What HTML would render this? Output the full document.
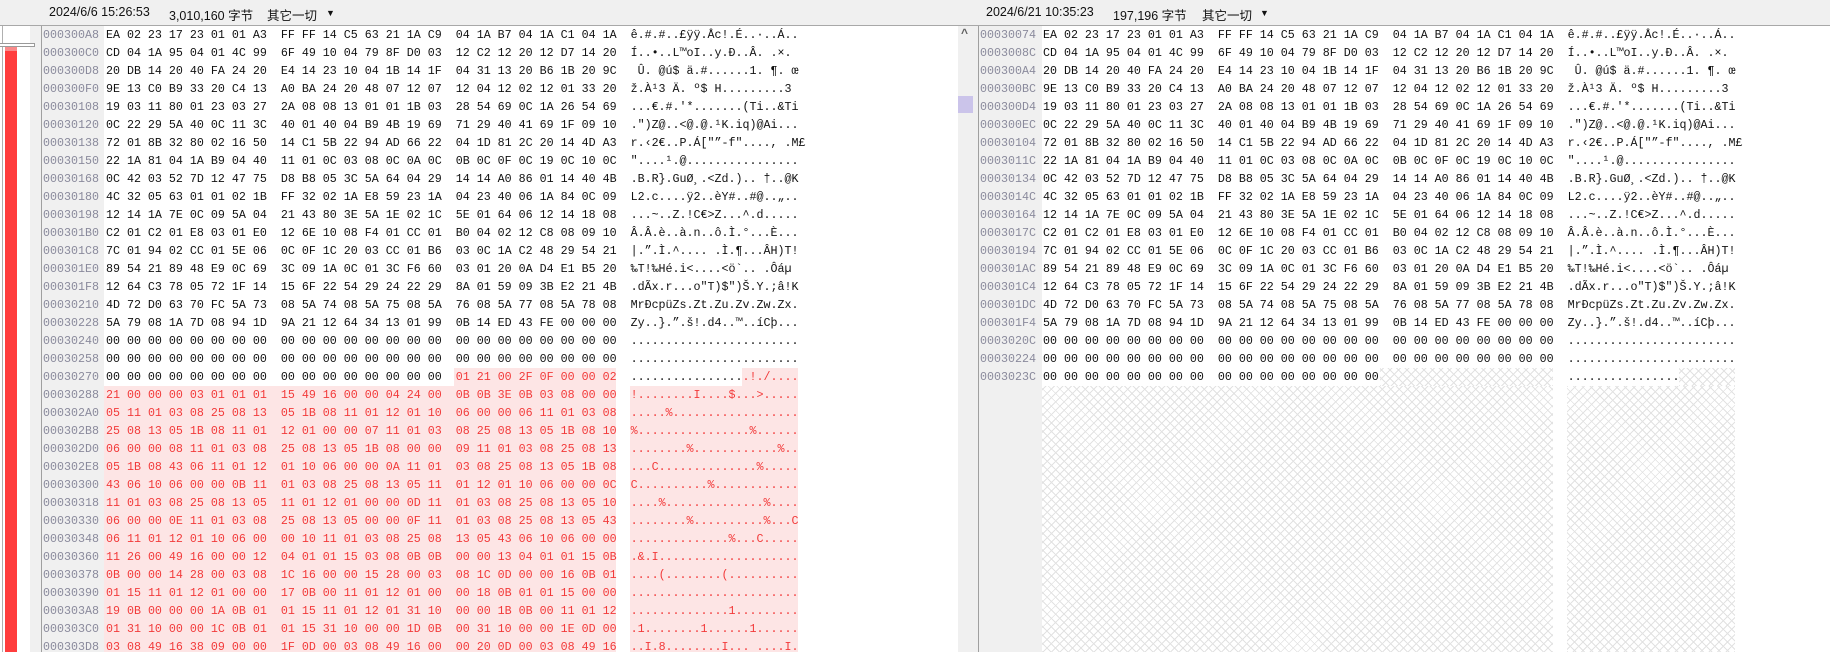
<!DOCTYPE html>
<html><head><meta charset="utf-8">
<style>
html,body{margin:0;padding:0;width:1830px;height:652px;overflow:hidden;background:#fff;position:relative}
.hdr{position:absolute;left:0;top:0;width:1830px;height:25px;background:#f0f0f0;border-bottom:1px solid #a8a8a8;font:12.5px "Liberation Sans","Noto Sans CJK SC",sans-serif;color:#111}
.hdr span{position:absolute;top:5px;white-space:nowrap}
.abs{position:absolute}
pre{position:absolute;margin:0;font:11.67px/18px "Liberation Mono",monospace;color:#111;white-space:pre}
.off{color:#8a8a9c}
.r{color:#f23a3a}
.hl{position:absolute;background:#fde5e5}
.hatch{position:absolute;background-color:#fff;background-image:repeating-linear-gradient(45deg,#e2e2e2 0 1px,transparent 1px 6px),repeating-linear-gradient(-45deg,#e2e2e2 0 1px,transparent 1px 6px)}
</style></head><body>
<div class="hdr">
<span style="left:49px">2024/6/6 15:26:53</span>
<span style="left:169px">3,010,160 字节</span>
<span style="left:267px">其它一切</span>
<span style="left:326px;font-size:9px;top:8px">▼</span>
<span style="left:986px">2024/6/21 10:35:23</span>
<span style="left:1113px">197,196 字节</span>
<span style="left:1202px">其它一切</span>
<span style="left:1260px;font-size:9px;top:8px">▼</span>
</div>
<div class="abs" style="left:2px;top:26px;width:1px;height:626px;background:#b0b0b0"></div>
<div class="abs" style="left:30px;top:26px;width:11px;height:626px;background:#f0f0f0"></div>
<div class="abs" style="left:0;top:43px;width:34px;height:2px;background:#fff;border:1px solid #9a9a9a;border-left:none"></div>
<div class="abs" style="left:5px;top:47px;width:12px;height:605px;background:#ff3d3d"></div>
<div class="abs" style="left:5px;top:47px;width:12px;height:4px;background:#f98a8a"></div>
<div class="abs" style="left:41px;top:26px;width:1px;height:626px;background:#a0a0a0"></div>
<div class="abs" style="left:42px;top:26px;width:62px;height:626px;background:#f0f0f0"></div>
<div class="hl" style="left:454px;top:368px;width:162px;height:18px"></div>
<div class="hl" style="left:742px;top:368px;width:56px;height:18px"></div>
<div class="hl" style="left:104px;top:386px;width:512px;height:266px"></div>
<div class="hl" style="left:630px;top:386px;width:168px;height:266px"></div>
<pre style="left:43px;top:26px"><span class="off">000300A8</span> EA 02 23 17 23 01 01 A3  FF FF 14 C5 63 21 1A C9  04 1A B7 04 1A C1 04 1A  ê.#.#..£ÿÿ.Åc!.É..·..Á..
<span class="off">000300C0</span> CD 04 1A 95 04 01 4C 99  6F 49 10 04 79 8F D0 03  12 C2 12 20 12 D7 14 20  Í..•..L™oI..y.Ð..Â. .×. 
<span class="off">000300D8</span> 20 DB 14 20 40 FA 24 20  E4 14 23 10 04 1B 14 1F  04 31 13 20 B6 1B 20 9C   Û. @ú$ ä.#......1. ¶. œ
<span class="off">000300F0</span> 9E 13 C0 B9 33 20 C4 13  A0 BA 24 20 48 07 12 07  12 04 12 02 12 01 33 20  ž.À¹3 Ä. º$ H.........3 
<span class="off">00030108</span> 19 03 11 80 01 23 03 27  2A 08 08 13 01 01 1B 03  28 54 69 0C 1A 26 54 69  ...€.#.'*.......(Ti..&amp;Ti
<span class="off">00030120</span> 0C 22 29 5A 40 0C 11 3C  40 01 40 04 B9 4B 19 69  71 29 40 41 69 1F 09 10  .")Z@..&lt;@.@.¹K.iq)@Ai...
<span class="off">00030138</span> 72 01 8B 32 80 02 16 50  14 C1 5B 22 94 AD 66 22  04 1D 81 2C 20 14 4D A3  r.‹2€..P.Á["”-f"...., .M£
<span class="off">00030150</span> 22 1A 81 04 1A B9 04 40  11 01 0C 03 08 0C 0A 0C  0B 0C 0F 0C 19 0C 10 0C  "....¹.@................
<span class="off">00030168</span> 0C 42 03 52 7D 12 47 75  D8 B8 05 3C 5A 64 04 29  14 14 A0 86 01 14 40 4B  .B.R}.GuØ¸.&lt;Zd.).. †..@K
<span class="off">00030180</span> 4C 32 05 63 01 01 02 1B  FF 32 02 1A E8 59 23 1A  04 23 40 06 1A 84 0C 09  L2.c....ÿ2..èY#..#@..„..
<span class="off">00030198</span> 12 14 1A 7E 0C 09 5A 04  21 43 80 3E 5A 1E 02 1C  5E 01 64 06 12 14 18 08  ...~..Z.!C€&gt;Z...^.d.....
<span class="off">000301B0</span> C2 01 C2 01 E8 03 01 E0  12 6E 10 08 F4 01 CC 01  B0 04 02 12 C8 08 09 10  Â.Â.è..à.n..ô.Ì.°...È...
<span class="off">000301C8</span> 7C 01 94 02 CC 01 5E 06  0C 0F 1C 20 03 CC 01 B6  03 0C 1A C2 48 29 54 21  |.”.Ì.^.... .Ì.¶...ÂH)T!
<span class="off">000301E0</span> 89 54 21 89 48 E9 0C 69  3C 09 1A 0C 01 3C F6 60  03 01 20 0A D4 E1 B5 20  ‰T!‰Hé.i&lt;....&lt;ö`.. .Ôáµ 
<span class="off">000301F8</span> 12 64 C3 78 05 72 1F 14  15 6F 22 54 29 24 22 29  8A 01 59 09 3B E2 21 4B  .dÃx.r...o"T)$")Š.Y.;â!K
<span class="off">00030210</span> 4D 72 D0 63 70 FC 5A 73  08 5A 74 08 5A 75 08 5A  76 08 5A 77 08 5A 78 08  MrÐcpüZs.Zt.Zu.Zv.Zw.Zx.
<span class="off">00030228</span> 5A 79 08 1A 7D 08 94 1D  9A 21 12 64 34 13 01 99  0B 14 ED 43 FE 00 00 00  Zy..}.”.š!.d4..™..íCþ...
<span class="off">00030240</span> 00 00 00 00 00 00 00 00  00 00 00 00 00 00 00 00  00 00 00 00 00 00 00 00  ........................
<span class="off">00030258</span> 00 00 00 00 00 00 00 00  00 00 00 00 00 00 00 00  00 00 00 00 00 00 00 00  ........................
<span class="off">00030270</span> 00 00 00 00 00 00 00 00  00 00 00 00 00 00 00 00  <span class="r">01 21 00 2F 0F 00 00 02</span>  ................<span class="r">.!./....</span>
<span class="off">00030288</span> <span class="r">21 00 00 00 03 01 01 01  15 49 16 00 00 04 24 00  0B 0B 3E 0B 03 08 00 00  !........I....$...&gt;.....</span>
<span class="off">000302A0</span> <span class="r">05 11 01 03 08 25 08 13  05 1B 08 11 01 12 01 10  06 00 00 06 11 01 03 08  .....%..................</span>
<span class="off">000302B8</span> <span class="r">25 08 13 05 1B 08 11 01  12 01 00 00 07 11 01 03  08 25 08 13 05 1B 08 10  %................%......</span>
<span class="off">000302D0</span> <span class="r">06 00 00 08 11 01 03 08  25 08 13 05 1B 08 00 00  09 11 01 03 08 25 08 13  ........%............%..</span>
<span class="off">000302E8</span> <span class="r">05 1B 08 43 06 11 01 12  01 10 06 00 00 0A 11 01  03 08 25 08 13 05 1B 08  ...C..............%.....</span>
<span class="off">00030300</span> <span class="r">43 06 10 06 00 00 0B 11  01 03 08 25 08 13 05 11  01 12 01 10 06 00 00 0C  C..........%............</span>
<span class="off">00030318</span> <span class="r">11 01 03 08 25 08 13 05  11 01 12 01 00 00 0D 11  01 03 08 25 08 13 05 10  ....%..............%....</span>
<span class="off">00030330</span> <span class="r">06 00 00 0E 11 01 03 08  25 08 13 05 00 00 0F 11  01 03 08 25 08 13 05 43  ........%..........%...C</span>
<span class="off">00030348</span> <span class="r">06 11 01 12 01 10 06 00  00 10 11 01 03 08 25 08  13 05 43 06 10 06 00 00  ..............%...C.....</span>
<span class="off">00030360</span> <span class="r">11 26 00 49 16 00 00 12  04 01 01 15 03 08 0B 0B  00 00 13 04 01 01 15 0B  .&amp;.I....................</span>
<span class="off">00030378</span> <span class="r">0B 00 00 14 28 00 03 08  1C 16 00 00 15 28 00 03  08 1C 0D 00 00 16 0B 01  ....(........(..........</span>
<span class="off">00030390</span> <span class="r">01 15 11 01 12 01 00 00  17 0B 00 11 01 12 01 00  00 18 0B 01 01 15 00 00  ........................</span>
<span class="off">000303A8</span> <span class="r">19 0B 00 00 00 1A 0B 01  01 15 11 01 12 01 31 10  00 00 1B 0B 00 11 01 12  ..............1.........</span>
<span class="off">000303C0</span> <span class="r">01 31 10 00 00 1C 0B 01  01 15 31 10 00 00 1D 0B  00 31 10 00 00 1E 0D 00  .1........1......1......</span>
<span class="off">000303D8</span> <span class="r">03 08 49 16 38 09 00 00  1F 0D 00 03 08 49 16 00  00 20 0D 00 03 08 49 16  ..I.8........I... ....I.</span></pre>
<div class="abs" style="left:958px;top:26px;width:20px;height:626px;background:#f0f0f0"></div>
<div class="abs" style="left:961px;top:26px;font:bold 12px 'Liberation Sans',sans-serif;color:#606060">^</div>
<div class="abs" style="left:958px;top:96px;width:15px;height:17px;background:#cbc4ea"></div>
<div class="abs" style="left:978px;top:26px;width:1px;height:626px;background:#a0a0a0"></div>
<div class="abs" style="left:979px;top:26px;width:63px;height:626px;background:#f0f0f0"></div>
<div class="hatch" style="left:1380px;top:368px;width:173px;height:18px"></div>
<div class="hatch" style="left:1679px;top:368px;width:56px;height:18px"></div>
<div class="hatch" style="left:1042px;top:386px;width:511px;height:266px"></div>
<div class="hatch" style="left:1567px;top:386px;width:168px;height:266px"></div>
<pre style="left:980px;top:26px"><span class="off">00030074</span> EA 02 23 17 23 01 01 A3  FF FF 14 C5 63 21 1A C9  04 1A B7 04 1A C1 04 1A  ê.#.#..£ÿÿ.Åc!.É..·..Á..
<span class="off">0003008C</span> CD 04 1A 95 04 01 4C 99  6F 49 10 04 79 8F D0 03  12 C2 12 20 12 D7 14 20  Í..•..L™oI..y.Ð..Â. .×. 
<span class="off">000300A4</span> 20 DB 14 20 40 FA 24 20  E4 14 23 10 04 1B 14 1F  04 31 13 20 B6 1B 20 9C   Û. @ú$ ä.#......1. ¶. œ
<span class="off">000300BC</span> 9E 13 C0 B9 33 20 C4 13  A0 BA 24 20 48 07 12 07  12 04 12 02 12 01 33 20  ž.À¹3 Ä. º$ H.........3 
<span class="off">000300D4</span> 19 03 11 80 01 23 03 27  2A 08 08 13 01 01 1B 03  28 54 69 0C 1A 26 54 69  ...€.#.'*.......(Ti..&amp;Ti
<span class="off">000300EC</span> 0C 22 29 5A 40 0C 11 3C  40 01 40 04 B9 4B 19 69  71 29 40 41 69 1F 09 10  .")Z@..&lt;@.@.¹K.iq)@Ai...
<span class="off">00030104</span> 72 01 8B 32 80 02 16 50  14 C1 5B 22 94 AD 66 22  04 1D 81 2C 20 14 4D A3  r.‹2€..P.Á["”-f"...., .M£
<span class="off">0003011C</span> 22 1A 81 04 1A B9 04 40  11 01 0C 03 08 0C 0A 0C  0B 0C 0F 0C 19 0C 10 0C  "....¹.@................
<span class="off">00030134</span> 0C 42 03 52 7D 12 47 75  D8 B8 05 3C 5A 64 04 29  14 14 A0 86 01 14 40 4B  .B.R}.GuØ¸.&lt;Zd.).. †..@K
<span class="off">0003014C</span> 4C 32 05 63 01 01 02 1B  FF 32 02 1A E8 59 23 1A  04 23 40 06 1A 84 0C 09  L2.c....ÿ2..èY#..#@..„..
<span class="off">00030164</span> 12 14 1A 7E 0C 09 5A 04  21 43 80 3E 5A 1E 02 1C  5E 01 64 06 12 14 18 08  ...~..Z.!C€&gt;Z...^.d.....
<span class="off">0003017C</span> C2 01 C2 01 E8 03 01 E0  12 6E 10 08 F4 01 CC 01  B0 04 02 12 C8 08 09 10  Â.Â.è..à.n..ô.Ì.°...È...
<span class="off">00030194</span> 7C 01 94 02 CC 01 5E 06  0C 0F 1C 20 03 CC 01 B6  03 0C 1A C2 48 29 54 21  |.”.Ì.^.... .Ì.¶...ÂH)T!
<span class="off">000301AC</span> 89 54 21 89 48 E9 0C 69  3C 09 1A 0C 01 3C F6 60  03 01 20 0A D4 E1 B5 20  ‰T!‰Hé.i&lt;....&lt;ö`.. .Ôáµ 
<span class="off">000301C4</span> 12 64 C3 78 05 72 1F 14  15 6F 22 54 29 24 22 29  8A 01 59 09 3B E2 21 4B  .dÃx.r...o"T)$")Š.Y.;â!K
<span class="off">000301DC</span> 4D 72 D0 63 70 FC 5A 73  08 5A 74 08 5A 75 08 5A  76 08 5A 77 08 5A 78 08  MrÐcpüZs.Zt.Zu.Zv.Zw.Zx.
<span class="off">000301F4</span> 5A 79 08 1A 7D 08 94 1D  9A 21 12 64 34 13 01 99  0B 14 ED 43 FE 00 00 00  Zy..}.”.š!.d4..™..íCþ...
<span class="off">0003020C</span> 00 00 00 00 00 00 00 00  00 00 00 00 00 00 00 00  00 00 00 00 00 00 00 00  ........................
<span class="off">00030224</span> 00 00 00 00 00 00 00 00  00 00 00 00 00 00 00 00  00 00 00 00 00 00 00 00  ........................
<span class="off">0003023C</span> 00 00 00 00 00 00 00 00  00 00 00 00 00 00 00 00                           ................</pre>
</body></html>
